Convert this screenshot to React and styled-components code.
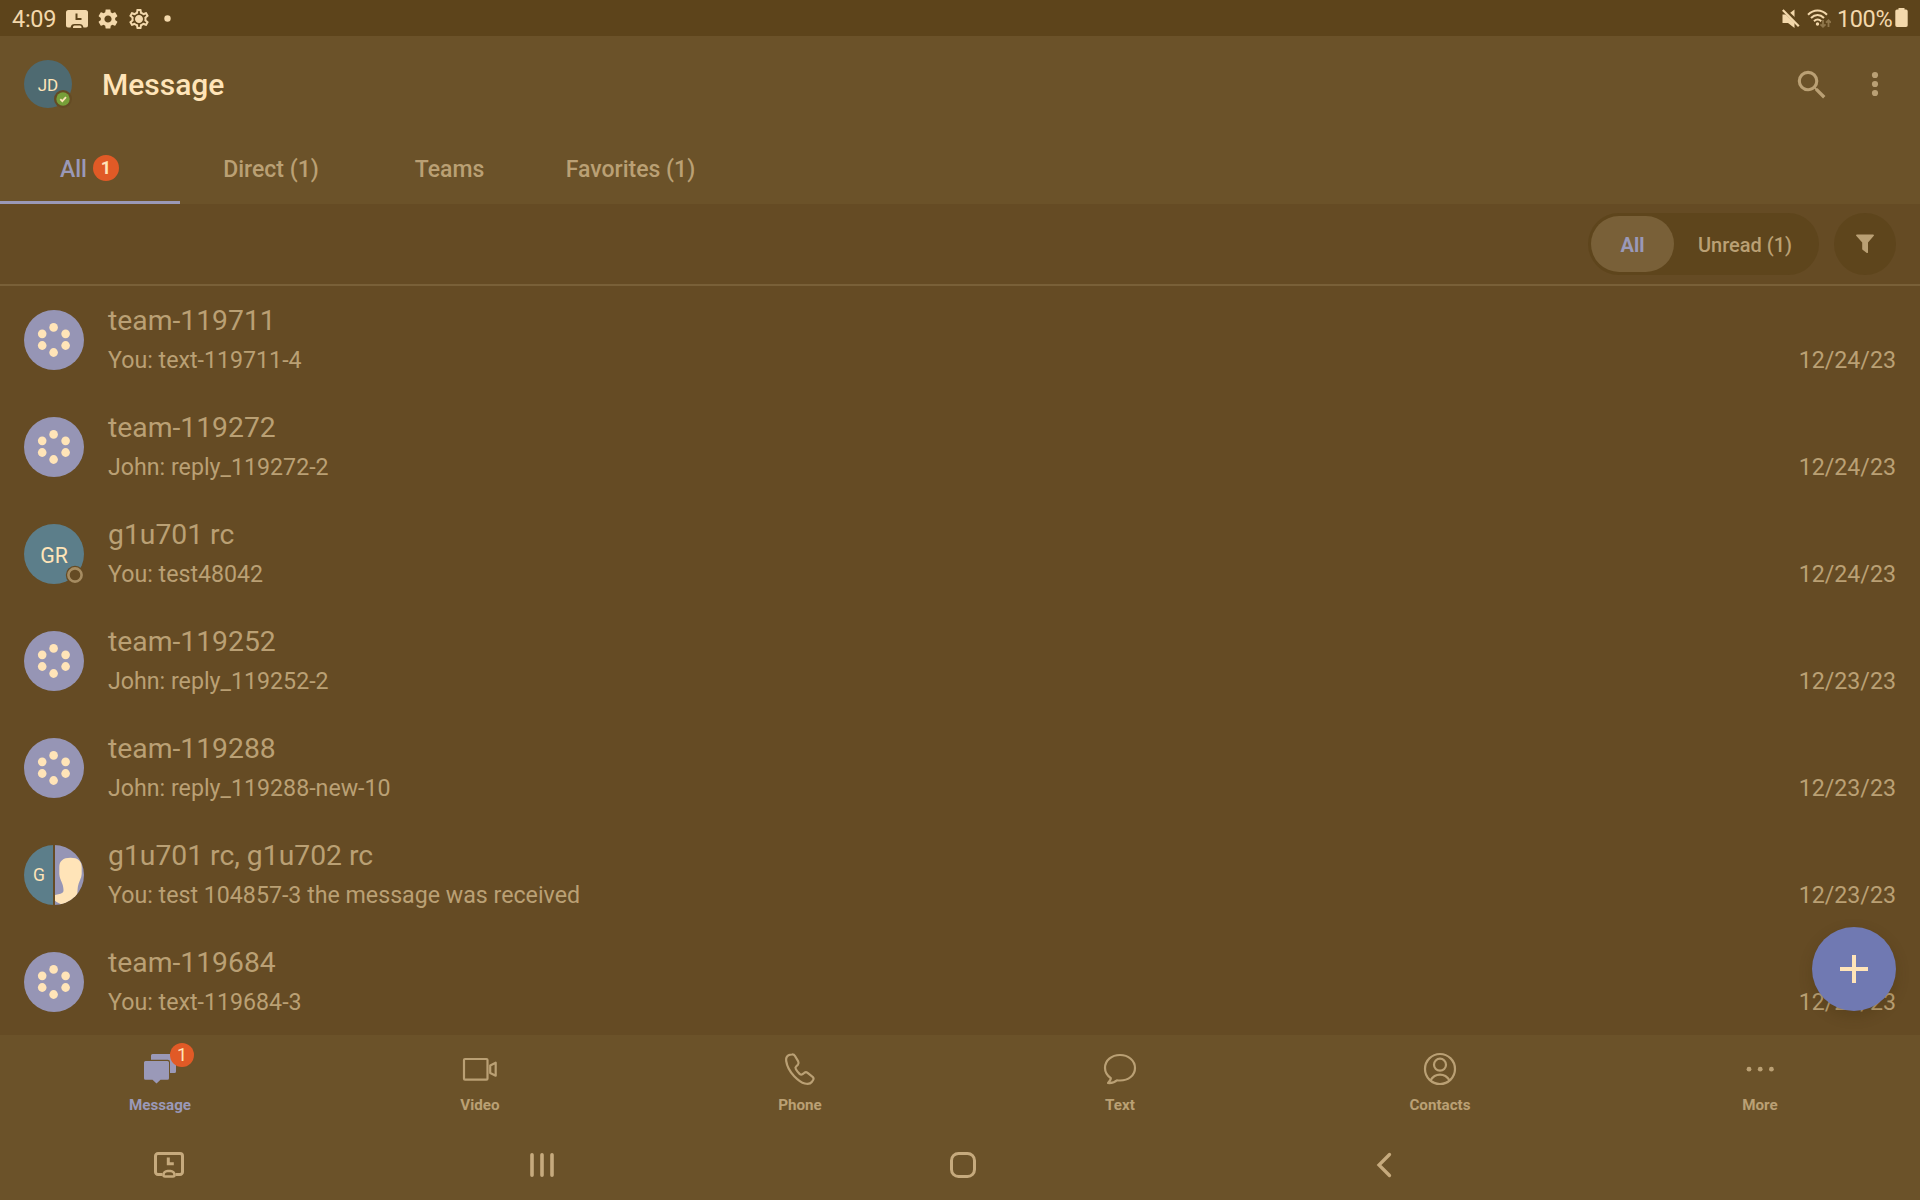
import React from "react";
import styled, { createGlobalStyle } from "styled-components";
import { MdSettings, MdOutlineSettings } from "react-icons/md";

const c = {
  status: "#5d441b",
  bar: "#6b5229",
  list: "#654b24",
  well: "#5e451c",
  raised: "#796038",
  cream: "#ffe4b8",
  statusText: "#f3d8ab",
  muted: "#baa074",
  sys: "#c6aa7d",
  accent: "#9a99b8",
  orange: "#e15a26",
  teal: "#5c7e8a",
};

const GlobalStyle = createGlobalStyle`
  * { box-sizing: border-box; }
  body { margin: 0; background: ${c.bar}; font-family: Roboto, "Liberation Sans", sans-serif; overflow: hidden; }
  svg { display: block; flex: none; }
`;

const Screen = styled.div`
  width: 1920px;
  height: 1200px;
  display: flex;
  flex-direction: column;
  position: relative;
  background: ${c.bar};
  color: ${c.muted};
`;

const StatusBar = styled.div`
  height: 36px;
  flex: none;
  display: flex;
  justify-content: space-between;
  padding: 1px 12px 0;
  background: ${c.status};
  color: ${c.statusText};
  font-size: 23.5px;
  line-height: 36px;
`;

const StatusGroup = styled.div`
  display: flex;
  align-items: center;
`;

const Clock = styled.span`
  width: 53px;
  letter-spacing: -0.3px;
`;

const Percent = styled.span`
  margin-left: 6px;
  width: 58px;
  letter-spacing: -0.4px;
`;

const Header = styled.header`
  height: 96px;
  flex: none;
  display: flex;
  align-items: center;
  padding: 0 24px;
`;

const Avatar = styled.div`
  width: ${(p) => p.$size}px;
  height: ${(p) => p.$size}px;
  flex: none;
  position: relative;
  display: flex;
  align-items: center;
  justify-content: center;
  border-radius: 50%;
  background: ${(p) => p.$bg};
  color: ${c.cream};
  font-size: ${(p) => p.$font || 21}px;
  line-height: 1;
`;

const Initials = styled.span`
  padding-top: 3px;
`;

const Presence = styled.svg`
  position: absolute;
  right: 0;
  bottom: 0;
`;

const Title = styled.h1`
  margin: 2px auto 0 30px;
  color: ${c.cream};
  font-size: 30px;
  font-weight: 500;
  line-height: 36px;
`;

const HeaderActions = styled.div`
  display: flex;
  align-items: center;
  gap: 31.5px;
`;

const SearchGlyph = styled.svg`
  margin-top: 1px;
`;

const Tabs = styled.nav`
  height: 72px;
  flex: none;
  display: flex;
`;

const Tab = styled.div`
  width: ${(p) => p.$width}px;
  display: flex;
  align-items: center;
  justify-content: center;
  gap: 6px;
  padding-top: 5px;
  border-bottom: 3px solid ${(p) => (p.$active ? c.accent : "transparent")};
  color: ${(p) => (p.$active ? c.accent : c.muted)};
  font-size: 23px;
  font-weight: 500;
`;

const Badge = styled.span`
  width: ${(p) => p.$size}px;
  height: ${(p) => p.$size}px;
  display: flex;
  align-items: center;
  justify-content: center;
  border-radius: 50%;
  background: ${c.orange};
  color: ${c.cream};
  font-size: 18px;
  font-weight: ${(p) => p.$weight};
  line-height: 1;
`;

const TabBadge = styled(Badge)`
  margin: -2px 1px 0 0;
`;

const NavBadge = styled(Badge)`
  position: absolute;
  left: 28px;
  top: -8px;
`;

const FilterBar = styled.div`
  height: 82px;
  flex: none;
  display: flex;
  justify-content: flex-end;
  gap: 15px;
  padding: 9px 24px 0;
  background: ${c.list};
  border-bottom: 2px solid ${c.raised};
`;

const Segmented = styled.div`
  width: 231px;
  height: 62px;
  display: flex;
  padding: 3px;
  border-radius: 31px;
  background: ${c.well};
`;

const Segment = styled.div`
  width: ${(p) => p.$width}px;
  display: flex;
  align-items: center;
  justify-content: center;
  padding-top: 2px;
  border-radius: 28px;
  background: ${(p) => (p.$active ? c.raised : "transparent")};
  color: ${(p) => (p.$active ? c.accent : c.muted)};
  font-size: 20px;
  font-weight: ${(p) => (p.$active ? 700 : 500)};
`;

const FilterButton = styled.div`
  width: 62px;
  height: 62px;
  display: flex;
  align-items: center;
  justify-content: center;
  border-radius: 50%;
  background: ${c.well};
`;

const List = styled.main`
  height: 749px;
  flex: none;
  display: flex;
  flex-direction: column;
  background: ${c.list};
`;

const Row = styled.div`
  height: 107px;
  flex: none;
  display: flex;
  padding: 24px 24px 0;
`;

const RowBody = styled.div`
  flex: 1;
  margin: -5px 0 0 24px;
`;

const RowTitle = styled.div`
  height: 41px;
  font-size: 28.3px;
  line-height: 32px;
`;

const RowLine = styled.div`
  display: flex;
  justify-content: space-between;
  font-size: 23.2px;
  line-height: 28px;
`;

const Fab = styled.button`
  position: absolute;
  left: 1812px;
  top: 927px;
  width: 84px;
  height: 84px;
  display: flex;
  align-items: center;
  justify-content: center;
  padding: 0;
  border: 0;
  border-radius: 50%;
  background: #7079b2;
  box-shadow: 0 5px 14px rgba(60, 40, 8, 0.24);
`;

const BottomNav = styled.nav`
  height: 94px;
  flex: none;
  display: flex;
`;

const NavItem = styled.div`
  width: 320px;
  display: flex;
  flex-direction: column;
  align-items: center;
  padding-top: 16px;
  color: ${(p) => (p.$active ? c.accent : c.muted)};
  font-size: 15.2px;
  font-weight: 700;
`;

const NavIcon = styled.div`
  position: relative;
  height: 45px;
`;

const NavLabel = styled.span`
  line-height: 18px;
`;

const SystemBar = styled.div`
  flex: 1;
  display: flex;
  align-items: center;
  color: ${c.sys};
`;

const SystemKey = styled.div`
  width: ${(p) => p.$width}px;
  display: flex;
  justify-content: center;
`;

const DeskClockFilled = () => (
  <svg width="24" height="20" viewBox="0 0 24 20">
    <path fill={c.statusText} d="M3.500 1h17a2.500 2.500 0 0 1 2.500 2.500v13a2 2 0 0 1-2 2h-2.500c-.5-2.500-1.800-3.500-4-3.500h-5c-2.200 0-3.500 1-4 3.500H3a2 2 0 0 1-2-2v-13A2.500 2.500 0 0 1 3.500 1z" />
    <path fill="none" stroke={c.status} strokeWidth="2" d="M11.500 4.500v5.500h5" />
    <path fill={c.statusText} d="M9.500 16.500h5.500a1.500 1.500 0 0 1 1.500 1.500v1H8v-1a1.500 1.500 0 0 1 1.500-1.500z" />
  </svg>
);

const DeskClock = () => (
  <svg width="32" height="28" viewBox="0 0 32 28" fill="none" stroke="currentColor" strokeWidth="3">
    <path d="M9.500 23.500H5a2.500 2.500 0 0 1-2.500-2.500V5A2.500 2.500 0 0 1 5 2.500h22A2.500 2.500 0 0 1 29.500 5v16a2.500 2.500 0 0 1-2.500 2.500h-4.500" />
    <path d="M10.500 24a4 4 0 0 1 4-4h3a4 4 0 0 1 4 4a1.500 1.500 0 0 1-1.500 1.500h-8a1.500 1.500 0 0 1-1.500-1.500z" strokeWidth="2.600" />
    <path d="M15.300 6.500v6.300h5.500" strokeWidth="3" />
  </svg>
);

const GearRing = () => (
  <svg width="24" height="24">
    <MdOutlineSettings size={24} color={c.statusText} />
    <circle cx="12" cy="12" r="3.300" fill={c.statusText} />
  </svg>
);

const Muted = () => (
  <svg width="18" height="20" viewBox="0 0 18 20">
    <path fill={c.statusText} d="M.500 5.500h5.500l6.500-5v18.500l-6.500-5H.500z" />
    <path stroke={c.status} strokeWidth="4.400" d="M1.200 .200l17 16" />
    <path stroke={c.statusText} strokeWidth="2.200" d="M.800 1l16 16.300" />
  </svg>
);

const Wifi = () => (
  <svg width="24" height="20" viewBox="0 0 24 20">
    <g fill="none" stroke={c.statusText} strokeWidth="2">
      <path d="M1 5.800c5.500-5.600 13.500-5.600 19 0" />
      <path d="M4 9c4-4 9.200-4 13 0" />
      <path d="M7 12.200c2.300-2.300 5-2.300 7.200 0" />
    </g>
    <circle cx="10.500" cy="15" r="1.700" fill={c.statusText} />
    <g fill="none" stroke="#8f764b" strokeWidth="1.800">
      <path d="M16 11v7M13.500 15.300l2.500 2.500 2.500-2.500M21.500 18v-7M19 13.700l2.500-2.500 2.500 2.500" />
    </g>
  </svg>
);

const dots = [[29.6, 17.4], [29.6, 42.5], [18.2, 23.8], [41.6, 23.8], [18.2, 35.5], [41.6, 35.5]];

const TeamAvatar = () => (
  <Avatar $size={60} $bg="#9695b5">
    <svg width="60" height="60">
      {dots.map(([x, y]) => (
        <ellipse key={`${x}-${y}`} cx={x} cy={y} rx="4.300" ry="4.400" fill={c.cream} />
      ))}
    </svg>
  </Avatar>
);

const PersonAvatar = () => (
  <Avatar $size={60} $bg={c.teal} $font={21.3}>
    <Initials>GR</Initials>
    <Presence width="20" height="20">
      <circle cx="11" cy="11" r="9.200" fill={c.list} />
      <circle cx="11" cy="11" r="6.600" fill="none" stroke="#a68c61" strokeWidth="2.600" />
    </Presence>
  </Avatar>
);

const PairFrame = styled.div`
  width: 60px;
  height: 60px;
  flex: none;
  display: flex;
  gap: 2px;
  border-radius: 50%;
  overflow: hidden;
`;

const PairHalf = styled.div`
  width: 29px;
  display: flex;
  align-items: center;
  justify-content: center;
  padding: 2px 0 0 1px;
  background: ${c.teal};
  color: ${c.cream};
  font-size: 17.5px;
  line-height: 1;
`;

const PairAvatar = () => (
  <PairFrame>
    <PairHalf>G</PairHalf>
    <svg width="29" height="60" viewBox="31 0 29 60">
      <path fill="#9695b5" d="M31 0h29v60H31z" />
      <path fill={c.cream} d="M46.500 12.700C54 12.700 57.700 16 57.700 22V29C57.700 33 54.600 37 53.900 41.500C53.500 44.500 53.500 46 53.300 49L56 60H38.500C36 59 33 57.500 31 55.800V50L36.500 48.700C39 48 39.600 47 39.500 45C39.400 42 38.800 40 37.800 37.500C36.500 34.500 35.500 32 35.300 29V22C35.300 16 39 12.700 46.500 12.700z" />
    </svg>
  </PairFrame>
);

const rows = [
  { kind: "team", title: "team-119711", text: "You: text-119711-4", date: "12/24/23" },
  { kind: "team", title: "team-119272", text: "John: reply_119272-2", date: "12/24/23" },
  { kind: "person", title: "g1u701 rc", text: "You: test48042", date: "12/24/23" },
  { kind: "team", title: "team-119252", text: "John: reply_119252-2", date: "12/23/23" },
  { kind: "team", title: "team-119288", text: "John: reply_119288-new-10", date: "12/23/23" },
  { kind: "pair", title: "g1u701 rc, g1u702 rc", text: "You: test 104857-3 the message was received", date: "12/23/23" },
  { kind: "team", title: "team-119684", text: "You: text-119684-3", date: "12/23/23" },
];

const avatars = { team: TeamAvatar, person: PersonAvatar, pair: PairAvatar };

const Stroke = ({ children, width = 2.2 }) => (
  <svg width="36" height="36" viewBox="0 0 36 36" fill="none" stroke="currentColor" strokeWidth={width} strokeLinejoin="round" strokeLinecap="round">
    {children}
  </svg>
);

const navItems = [
  {
    label: "Message",
    active: true,
    icon: (
      <svg width="36" height="36" viewBox="0 0 36 36" fill="currentColor">
        <path d="M10.500 3h22A1.500 1.500 0 0 1 34 4.500v16a1.500 1.500 0 0 1-1.500 1.500H28V11a2.200 2.200 0 0 0-2.200-2.200H9V4.500A1.500 1.500 0 0 1 10.500 3z" />
        <path d="M3.500 10h22a1.500 1.500 0 0 1 1.500 1.500v15.700a1.500 1.500 0 0 1-1.500 1.500h-7L14.500 32.500l-4-3.800h-7A1.500 1.500 0 0 1 2 27.200V11.500A1.500 1.500 0 0 1 3.500 10z" />
      </svg>
    ),
  },
  {
    label: "Video",
    icon: (
      <Stroke>
        <rect x="2" y="8" width="23.500" height="20.700" rx="1" />
        <path d="M28.200 14.500l5.500-2.800v13l-5.500-2.800z" />
      </Stroke>
    ),
  },
  {
    label: "Phone",
    icon: (
      <Stroke>
        <path d="M6.500 4.300C4.500 5.400 3.800 7 4.200 10c.8 5.500 3.800 10.800 8 15.200 3.300 3.400 6.700 6.300 10.600 7.300 3.700.9 5.400.6 7-1.500l1.300-2c.8-1.300.6-2.200-.5-3.200l-5-4c-1.200-.9-2.300-.8-3.300.1l-2 1.500c-1 .6-1.800.3-2.700-.5-1.500-1.400-2.700-3-3.700-4.700-.7-1.200-.7-1.900.2-2.700l1.800-1.800c.9-1 1-2 .3-3.300L13 5c-.8-1.300-1.700-1.700-3.100-1.500-1.300.1-2.400.3-3.400.8z" />
      </Stroke>
    ),
  },
  {
    label: "Text",
    icon: (
      <Stroke>
        <path d="M18 4C9.500 4 3 9.500 3 17c0 4.200 2 7.300 5.800 10.200C9 29 7.500 30.500 6 32c3.800.2 7.200-.8 9-2.700 1 .2 2 .2 3 .2 8.500 0 15-5.200 15-12.500S26.500 4 18 4z" />
      </Stroke>
    ),
  },
  {
    label: "Contacts",
    icon: (
      <Stroke>
        <circle cx="18" cy="18" r="15" />
        <circle cx="18" cy="13.700" r="6" />
        <path d="M8.500 29.300C10.800 25.500 14 23.600 18 23.600s7.200 1.900 9.500 5.700" />
      </Stroke>
    ),
  },
  {
    label: "More",
    icon: (
      <svg width="36" height="36" fill="currentColor">
        <circle cx="7" cy="18.200" r="2.400" />
        <circle cx="18.200" cy="18.200" r="2.400" />
        <circle cx="29.400" cy="18.200" r="2.400" />
      </svg>
    ),
  },
];

export default function App() {
  return (
    <>
      <GlobalStyle />
      <Screen>
        <StatusBar>
          <StatusGroup>
            <Clock>4:09</Clock>
            <DeskClockFilled />
            <svg width="7" height="1" />
            <MdSettings size={24} />
            <svg width="7" height="1" />
            <GearRing />
            <svg width="30" height="36">
              <circle cx="16.500" cy="17.500" r="3.200" fill={c.statusText} />
            </svg>
          </StatusGroup>
          <StatusGroup>
            <Muted />
            <svg width="7" height="1" />
            <Wifi />
            <Percent>100%</Percent>
            <svg width="13" height="22" viewBox="0 0 13 22" fill={c.statusText}>
              <path d="M3.500 0h6v1.500H11A1.700 1.700 0 0 1 12.700 3.200v14A1.700 1.700 0 0 1 11 19H2A1.700 1.700 0 0 1 .300 17.300v-14A1.700 1.700 0 0 1 2 1.500h1.500z" />
            </svg>
          </StatusGroup>
        </StatusBar>

        <Header>
          <Avatar $size={48} $bg="#4e6a71" $font={17}>
            <Initials>JD</Initials>
            <Presence width="18" height="18">
              <circle cx="9" cy="9" r="9" fill={c.list} />
              <circle cx="9" cy="9" r="6.700" fill="#779f39" />
              <path d="M6.300 9.200l2 2 3.700-4" fill="none" stroke={c.cream} strokeWidth="1.800" />
            </Presence>
          </Avatar>
          <Title>Message</Title>
          <HeaderActions>
            <SearchGlyph width="38" height="38" viewBox="0 0 24 24" fill="currentColor">
              <path d="M15.500 14h-.79l-.28-.27A6.470 6.470 0 0 0 16 9.500 6.500 6.500 0 1 0 9.500 16c1.610 0 3.090-.59 4.230-1.570l.27.28v.79l5 4.990L20.490 19l-4.990-5zm-6 0C7.010 14 5 11.990 5 9.500S7.010 5 9.500 5 14 7.010 14 9.500 11.990 14 9.500 14z" />
            </SearchGlyph>
            <svg width="34" height="36" fill="currentColor">
              <circle cx="13" cy="9" r="3.100" />
              <circle cx="13" cy="18" r="3.100" />
              <circle cx="13" cy="27" r="3.100" />
            </svg>
          </HeaderActions>
        </Header>

        <Tabs>
          <Tab $width={180} $active>
            All
            <TabBadge $size={26} $weight={700}>1</TabBadge>
          </Tab>
          <Tab $width={182}>Direct (1)</Tab>
          <Tab $width={175}>Teams</Tab>
          <Tab $width={187}>Favorites (1)</Tab>
        </Tabs>

        <FilterBar>
          <Segmented>
            <Segment $width={83} $active>All</Segment>
            <Segment $width={142}>Unread (1)</Segment>
          </Segmented>
          <FilterButton>
            <svg width="18" height="20" viewBox="0 0 18 20" fill="currentColor">
              <path d="M.8.500h16.400a.8.800 0 0 1 .6 1.300L12 8.500v9.700c0 .8-.6 1.100-1.200.7L6.600 15.700a1 1 0 0 1-.4-.8V8.500L.2 1.800A.8.800 0 0 1 .8.500z" />
            </svg>
          </FilterButton>
        </FilterBar>

        <List>
          {rows.map((row) => {
            const Picture = avatars[row.kind];
            return (
              <Row key={row.title}>
                <Picture />
                <RowBody>
                  <RowTitle>{row.title}</RowTitle>
                  <RowLine>
                    <span>{row.text}</span>
                    <span>{row.date}</span>
                  </RowLine>
                </RowBody>
              </Row>
            );
          })}
        </List>

        <BottomNav>
          {navItems.map((item) => (
            <NavItem key={item.label} $active={item.active}>
              <NavIcon>
                {item.icon}
                {item.active && <NavBadge $size={24} $weight={400}>1</NavBadge>}
              </NavIcon>
              <NavLabel>{item.label}</NavLabel>
            </NavItem>
          ))}
        </BottomNav>

        <SystemBar>
          <SystemKey $width={337}>
            <DeskClock />
          </SystemKey>
          <SystemKey $width={410}>
            <svg width="24" height="26" stroke="currentColor" strokeWidth="3.600" strokeLinecap="round">
              <path d="M2 2.800v20.400M12 2.800v20.400M22 2.800v20.400" />
            </svg>
          </SystemKey>
          <SystemKey $width={432}>
            <svg width="28" height="28" fill="none" stroke="currentColor" strokeWidth="3">
              <rect x="2.500" y="2.500" width="23" height="23" rx="7" />
            </svg>
          </SystemKey>
          <SystemKey $width={410}>
            <svg width="16" height="26" fill="none" stroke="currentColor" strokeWidth="3.300" strokeLinecap="round" strokeLinejoin="miter">
              <path d="M13.500 2.500L3 13l10.500 10.500" />
            </svg>
          </SystemKey>
        </SystemBar>

        <Fab aria-label="New message">
          <svg width="28" height="28" fill={c.cream}>
            <path d="M12 0h4v12h12v4H16v12h-4V16H0v-4h12z" />
          </svg>
        </Fab>
      </Screen>
    </>
  );
}
